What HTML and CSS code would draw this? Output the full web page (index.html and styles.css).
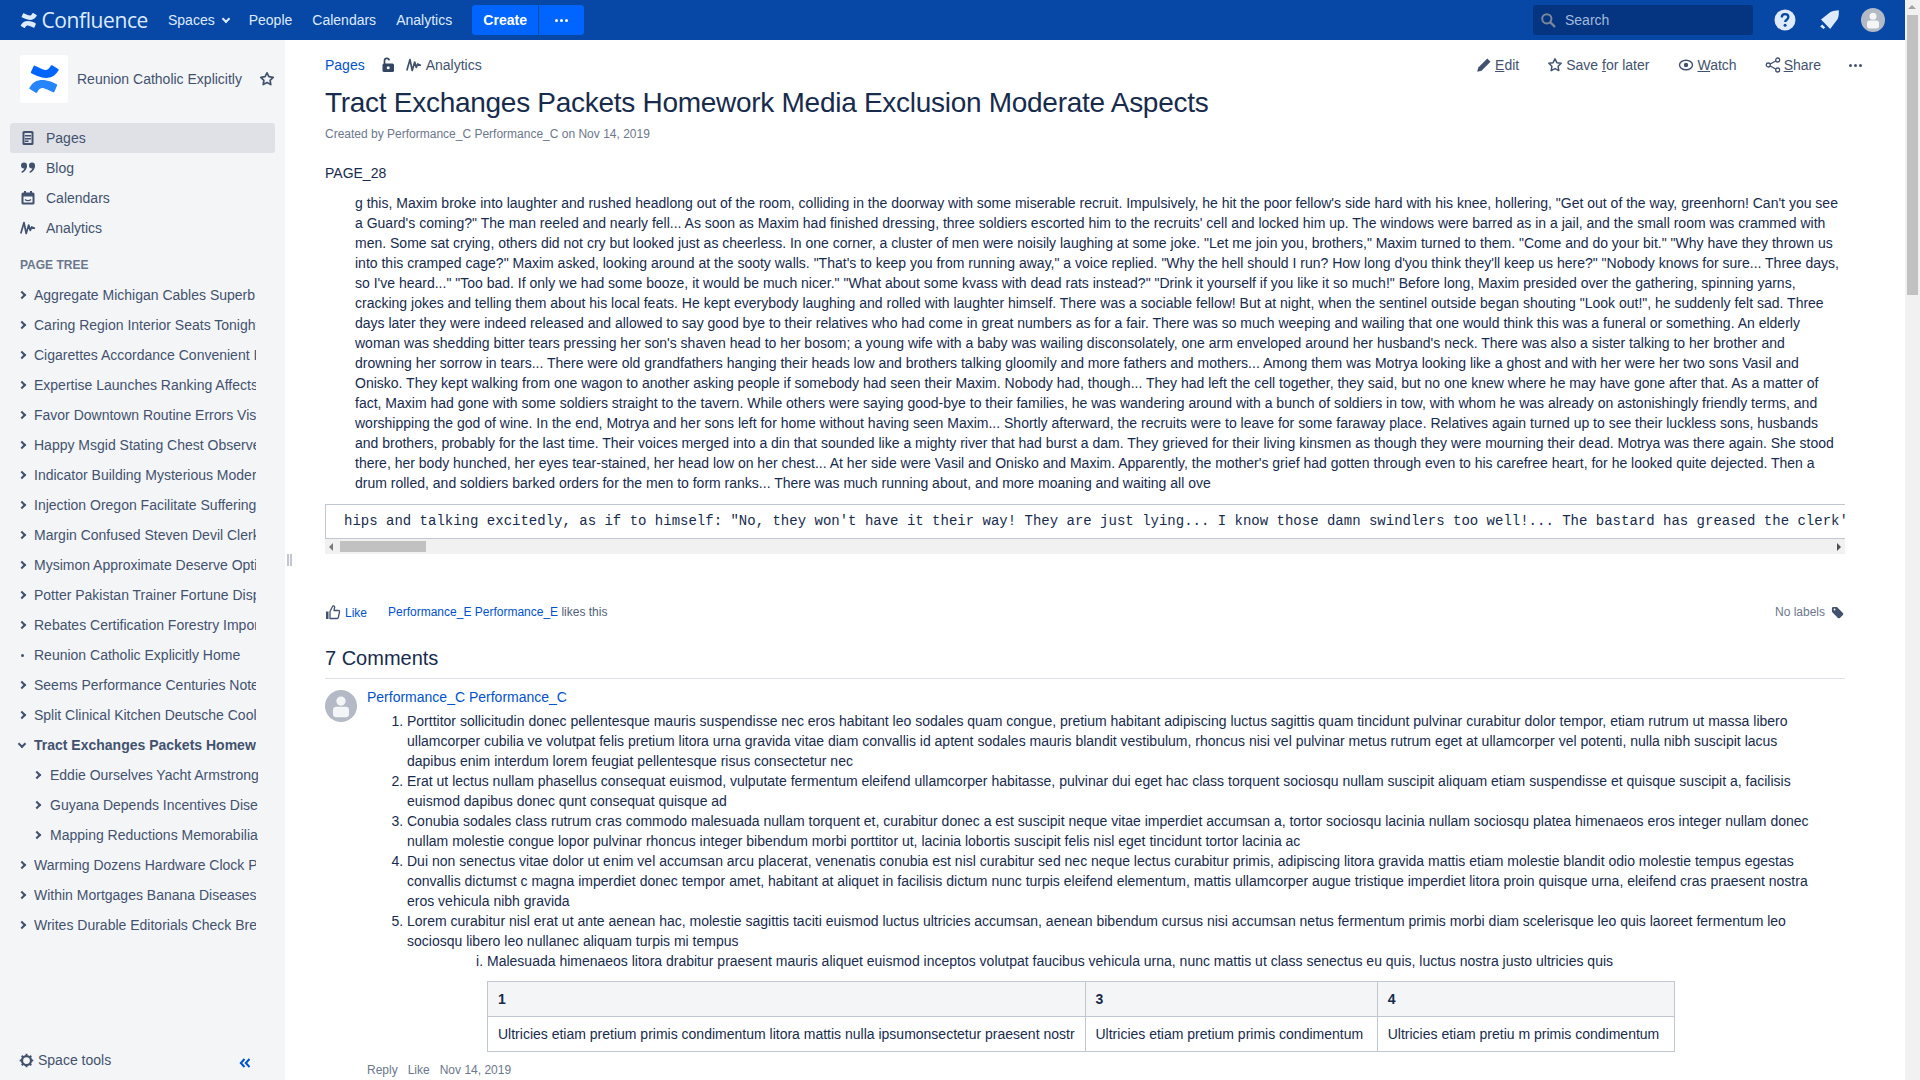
FILE: index.html
```html
<!DOCTYPE html>
<html lang="en">
<head>
    <meta charset="UTF-8">
    <meta name="viewport" content="width=device-width, initial-scale=1.0">
    <title>Tract Exchanges Packets Homework Media Exclusion Moderate Aspects</title>
    <link rel="stylesheet" href="styles.css">
</head>
<body>
<div class="window">
    <div class="page">

        <!-- Top bar -->
        <header class="topbar">
            <a class="brand">
                <svg class="brand-icon" viewBox="0 0 32 32"><path fill="#deebff" d="M2.3 23.4c-.3.5-.6 1-.9 1.4-.2.4-.1 1 .4 1.2l6 3.7c.4.3 1 .1 1.3-.3.2-.4.5-.9.9-1.5 2.4-3.9 4.8-3.4 9.1-1.4l6 2.8c.5.2 1 0 1.2-.4l2.8-6.4c.2-.4 0-1-.4-1.2-1.2-.6-3.7-1.7-6-2.8C13.8 15.5 6.4 16.7 2.3 23.4z"/><path fill="#deebff" d="M29.7 8.6c.3-.5.6-1 .9-1.4.2-.4.1-1-.4-1.2l-6-3.7c-.4-.3-1-.1-1.3.3-.2.4-.5.9-.9 1.5-2.4 3.9-4.8 3.4-9.1 1.4l-6-2.8c-.5-.2-1 0-1.2.4L2.9 9c-.2.4 0 1 .4 1.2 1.2.6 3.7 1.7 6 2.8 8.9 3.5 16.3 2.3 20.4-4.4z"/></svg>
                <span class="brand-name">Confluence</span>
            </a>
            <nav class="topnav">
                <a>Spaces <i class="chev chev-down chev-light"></i></a>
                <a>People</a>
                <a>Calendars</a>
                <a>Analytics</a>
            </nav>
            <div class="create-group">
                <button class="create-btn">Create</button>
                <button class="create-more"><span></span><span></span><span></span></button>
            </div>
            <div class="topbar-right">
                <div class="search">
                    <svg width="16" height="16" viewBox="0 0 16 16"><circle cx="6.8" cy="6.8" r="4.6" fill="none" stroke="#7a869a" stroke-width="2"/><path d="M10.4 10.4l4 4" stroke="#7a869a" stroke-width="2.2" stroke-linecap="round"/></svg>
                    <span>Search</span>
                </div>
                <svg class="top-icon" viewBox="0 0 24 24"><circle cx="12" cy="12" r="10.5" fill="#deebff"/><path d="M8.8 9.4c0-2 1.5-3.2 3.3-3.2s3.3 1.1 3.3 2.9c0 2.7-3.2 2.6-3.2 5" fill="none" stroke="#0747a6" stroke-width="2.3"/><circle cx="12.1" cy="17.3" r="1.5" fill="#0747a6"/></svg>
                <svg class="top-icon" viewBox="0 0 24 24"><path fill="#deebff" d="M21.8 2.2c-2.6.2-5.8.5-8.300 1.900L6.800 9.300 4 11.600 13.200 21l2-2.700 5.300-7.100c1.300-2.300 1.500-6.300 1.300-9zM5.200 16.500l-2 2.100 3.300 2.400 1.700-1.500z"/></svg>
                <span class="user-avatar">
                    <svg viewBox="0 0 24 24"><circle cx="12" cy="12" r="12" fill="#b3bac5"/><circle cx="12" cy="8.300" r="3.500" fill="#f4f5f7"/><rect x="6" y="12.500" width="12" height="8" rx="2.500" fill="#f4f5f7"/></svg>
                </span>
            </div>
        </header>

        <div class="columns">

            <!-- Sidebar -->
            <aside class="sidebar">
                <div class="space-head">
                    <span class="space-logo">
                        <svg viewBox="0 0 32 32"><path fill="#2684ff" d="M2.3 23.4c-.3.5-.6 1-.9 1.4-.2.4-.1 1 .4 1.2l6 3.7c.4.3 1 .1 1.3-.3.2-.4.5-.9.9-1.5 2.4-3.9 4.8-3.4 9.1-1.4l6 2.8c.5.2 1 0 1.2-.4l2.800-6.400c.2-.4 0-1-.4-1.200-1.200-.6-3.700-1.700-6-2.800C13.800 15.500 6.400 16.700 2.300 23.400z"/><path fill="#0065ff" d="M29.700 8.600c.3-.5.6-1 .9-1.400.2-.4.1-1-.4-1.200l-6-3.700c-.4-.3-1-.1-1.300.3-.2.4-.5.9-.9 1.500-2.400 3.900-4.800 3.400-9.100 1.400l-6-2.800c-.5-.2-1 0-1.200.4L2.900 9c-.2.4 0 1 .4 1.200 1.200.6 3.700 1.700 6 2.800 8.900 3.500 16.300 2.300 20.400-4.400z"/></svg>
                    </span>
                    <span class="space-name">Reunion Catholic Explicitly</span>
                    <svg class="space-star" viewBox="0 0 16 16"><path d="M8 1.800l1.900 3.900 4.300.6-3.100 3 .7 4.300L8 11.600l-3.800 2 .7-4.300-3.100-3 4.300-.6z" fill="none" stroke="#42526e" stroke-width="1.700" stroke-linejoin="round"/></svg>
                </div>

                <ul class="side-nav">
                    <li class="active">
                        <svg viewBox="0 0 16 16"><rect x="2.500" y="1" width="11" height="14" rx="1.500" fill="#42526e"/><rect x="4.500" y="3" width="7" height="10" fill="#dfe1e6"/><path d="M5 5h6v1.500H5zM5 8h6v1.500H5zM5 10.500h3.500V12H5z" fill="#42526e"/></svg>
                        Pages
                    </li>
                    <li>
                        <svg viewBox="0 0 16 16"><circle cx="4" cy="5.500" r="3" fill="#42526e"/><path d="M7 5.500c0 3.500-2 6-5 7.500l-.7-1.300C3.500 10.500 4.500 9 4.500 7z" fill="#42526e"/><circle cx="12" cy="5.500" r="3" fill="#42526e"/><path d="M15 5.500c0 3.500-2 6-5 7.500l-.7-1.300c2.200-1.200 3.200-2.700 3.200-4.700z" fill="#42526e"/></svg>
                        Blog
                    </li>
                    <li>
                        <svg viewBox="0 0 16 16"><rect x="1.500" y="2.500" width="13" height="12" rx="1.500" fill="#42526e"/><rect x="4" y="1" width="2" height="3" fill="#42526e"/><rect x="10" y="1" width="2" height="3" fill="#42526e"/><rect x="3.500" y="6.500" width="9" height="6" fill="#f4f5f7"/><path d="M5 9.500c1.500 1.500 4.500 1.500 6 0" stroke="#42526e" fill="none" stroke-width="1.200"/></svg>
                        Calendars
                    </li>
                    <li>
                        <svg viewBox="0 0 16 16"><path d="M.8 13.500L4 2.500l2.200 11 2.500-8.500 1.600 5.500 1.400-3.500 3.300 1.500" fill="none" stroke="#42526e" stroke-width="1.700" stroke-linejoin="round"/></svg>
                        Analytics
                    </li>
                </ul>

                <h5 class="tree-title">PAGE TREE</h5>
                <ul class="tree">
                    <li><i class="chev"></i><span>Aggregate Michigan Cables Superb Sister</span></li>
                    <li><i class="chev"></i><span>Caring Region Interior Seats Tonight Bound</span></li>
                    <li><i class="chev"></i><span>Cigarettes Accordance Convenient Ideas</span></li>
                    <li><i class="chev"></i><span>Expertise Launches Ranking Affects Model</span></li>
                    <li><i class="chev"></i><span>Favor Downtown Routine Errors Visual Notes</span></li>
                    <li><i class="chev"></i><span>Happy Msgid Stating Chest Observed Level</span></li>
                    <li><i class="chev"></i><span>Indicator Building Mysterious Modern Guide</span></li>
                    <li><i class="chev"></i><span>Injection Oregon Facilitate Suffering Cases</span></li>
                    <li><i class="chev"></i><span>Margin Confused Steven Devil Clerk Notice</span></li>
                    <li><i class="chev"></i><span>Mysimon Approximate Deserve Optimal Plan</span></li>
                    <li><i class="chev"></i><span>Potter Pakistan Trainer Fortune Display Set</span></li>
                    <li><i class="chev"></i><span>Rebates Certification Forestry Important Work</span></li>
                    <li><i class="dot"></i><span>Reunion Catholic Explicitly Home</span></li>
                    <li><i class="chev"></i><span>Seems Performance Centuries Notes Archive</span></li>
                    <li><i class="chev"></i><span>Split Clinical Kitchen Deutsche Cool Items</span></li>
                    <li class="current"><i class="chev chev-down"></i><span>Tract Exchanges Packets Homework Media</span></li>
                    <li class="child"><i class="chev"></i><span>Eddie Ourselves Yacht Armstrong Press</span></li>
                    <li class="child"><i class="chev"></i><span>Guyana Depends Incentives Disease Watch</span></li>
                    <li class="child"><i class="chev"></i><span>Mapping Reductions Memorabilia Today</span></li>
                    <li><i class="chev"></i><span>Warming Dozens Hardware Clock Parts Sale</span></li>
                    <li><i class="chev"></i><span>Within Mortgages Banana Diseases Found</span></li>
                    <li><i class="chev"></i><span>Writes Durable Editorials Check Brew Shop</span></li>
                </ul>

                <div class="space-tools">
                    <svg viewBox="0 0 16 16"><circle cx="8" cy="8" r="4.800" fill="none" stroke="#42526e" stroke-width="2.400"/><path d="M8 .8v2.500M8 12.700v2.500M.8 8h2.500M12.700 8h2.500M2.900 2.900l1.800 1.800M11.300 11.300l1.800 1.800M2.900 13.100l1.800-1.800M11.300 4.700l1.800-1.800" stroke="#42526e" stroke-width="2"/></svg>
                    <span>Space tools</span>
                    <svg class="collapse" viewBox="0 0 12 10"><path d="M5.500 1L1.800 5l3.700 4M10.500 1L6.800 5l3.700 4" fill="none" stroke="#0052cc" stroke-width="2"/></svg>
                </div>
            </aside>

            <div class="sash"></div>

            <!-- Main content -->
            <main class="content">
                <div class="page-bar">
                    <div class="crumbs">
                        <a class="link">Pages</a>
                        <svg class="lock" viewBox="0 0 14 16"><path d="M3.500 7V3.500C3.500 2 4.500 1.300 5.800 1.300S8 2 8.200 3.300" fill="none" stroke="#344563" stroke-width="1.700"/><rect x="1.500" y="6.500" width="11.500" height="8.500" rx="1.500" fill="#344563"/><circle cx="7.200" cy="10.700" r="1.500" fill="#fff"/></svg>
                        <svg class="crumb-icon" viewBox="0 0 16 16"><path d="M.8 13.500L4 2.500l2.200 11 2.500-8.500 1.600 5.500 1.400-3.500 3.300 1.500" fill="none" stroke="#42526e" stroke-width="1.700" stroke-linejoin="round"/></svg>
                        <span>Analytics</span>
                    </div>
                    <div class="actions">
                        <a>
                            <svg viewBox="0 0 16 16"><path d="M11.300 1.500l3.200 3.200-9 9-4.300 1.100 1.100-4.300z" fill="#42526e"/></svg>
                            <span><u>E</u>dit</span>
                        </a>
                        <a>
                            <svg viewBox="0 0 16 16"><path d="M8 1.800l1.900 3.900 4.300.6-3.100 3 .7 4.300L8 11.600l-3.800 2 .7-4.300-3.100-3 4.300-.6z" fill="none" stroke="#42526e" stroke-width="1.500" stroke-linejoin="round"/></svg>
                            <span>Save <u>f</u>or later</span>
                        </a>
                        <a class="watch">
                            <svg viewBox="0 0 16 16"><ellipse cx="8" cy="8" rx="6.500" ry="4.800" fill="none" stroke="#42526e" stroke-width="1.400"/><circle cx="8" cy="8" r="2.200" fill="#42526e"/></svg>
                            <span><u>W</u>atch</span>
                        </a>
                        <a>
                            <svg viewBox="0 0 16 16"><path d="M12.500 3L3.500 8l9 5" fill="none" stroke="#42526e" stroke-width="1.300"/><circle cx="12.700" cy="3" r="2" fill="#fff" stroke="#42526e" stroke-width="1.300"/><circle cx="3.300" cy="8" r="2" fill="#fff" stroke="#42526e" stroke-width="1.300"/><circle cx="12.700" cy="13" r="2" fill="#fff" stroke="#42526e" stroke-width="1.300"/></svg>
                            <span><u>S</u>hare</span>
                        </a>
                        <a class="more-dots"><span></span><span></span><span></span></a>
                    </div>
                </div>

                <h1 class="page-title">Tract Exchanges Packets Homework Media Exclusion Moderate Aspects</h1>
                <p class="byline">Created by Performance_C Performance_C on Nov 14, 2019</p>

                <p class="plain">PAGE_28</p>
                <p class="story">g this, Maxim broke into laughter and rushed headlong out of the room, colliding in the doorway with some miserable recruit. Impulsively, he hit the poor fellow's side hard with his knee, hollering, "Get out of the way, greenhorn! Can't you see a Guard's coming?" The man reeled and nearly fell... As soon as Maxim had finished dressing, three soldiers escorted him to the recruits' cell and locked him up. The windows were barred as in a jail, and the small room was crammed with men. Some sat crying, others did not cry but looked just as cheerless. In one corner, a cluster of men were noisily laughing at some joke. "Let me join you, brothers," Maxim turned to them. "Come and do your bit." "Why have they thrown us into this cramped cage?" Maxim asked, looking around at the sooty walls. "That's to keep you from running away," a voice replied. "Why the hell should I run? How long d'you think they'll keep us here?" "Nobody knows for sure... Three days, so I've heard..." "Too bad. If only we had some booze, it would be much nicer." "What about some kvass with dead rats instead?" "Drink it yourself if you like it so much!" Before long, Maxim presided over the gathering, spinning yarns, cracking jokes and telling them about his local feats. He kept everybody laughing and rolled with laughter himself. There was a sociable fellow! But at night, when the sentinel outside began shouting "Look out!", he suddenly felt sad. Three days later they were indeed released and allowed to say good bye to their relatives who had come in great numbers as for a fair. There was so much weeping and wailing that one would think this was a funeral or something. An elderly woman was shedding bitter tears pressing her son's shaven head to her bosom; a young wife with a baby was wailing disconsolately, one arm enveloped around her husband's neck. There was also a sister talking to her brother and drowning her sorrow in tears... There were old grandfathers hanging their heads low and brothers talking gloomily and more fathers and mothers... Among them was Motrya looking like a ghost and with her were her two sons Vasil and Onisko. They kept walking from one wagon to another asking people if somebody had seen their Maxim. Nobody had, though... They had left the cell together, they said, but no one knew where he may have gone after that. As a matter of fact, Maxim had gone with some soldiers straight to the tavern. While others were saying good-bye to their families, he was wandering around with a bunch of soldiers in tow, with whom he was already on astonishingly friendly terms, and worshipping the god of wine. In the end, Motrya and her sons left for home without having seen Maxim... Shortly afterward, the recruits were to leave for some faraway place. Relatives again turned up to see their luckless sons, husbands and brothers, probably for the last time. Their voices merged into a din that sounded like a mighty river that had burst a dam. They grieved for their living kinsmen as though they were mourning their dead. Motrya was there again. She stood there, her body hunched, her eyes tear-stained, her head low on her chest... At her side were Vasil and Onisko and Maxim. Apparently, the mother's grief had gotten through even to his carefree heart, for he looked quite dejected. Then a drum rolled, and soldiers barked orders for the men to form ranks... There was much running about, and more moaning and waiting all ove</p>

                <div class="code-wrap">
                    <pre class="code">hips and talking excitedly, as if to himself: "No, they won't have it their way! They are just lying... I know those damn swindlers too well!... The bastard has greased the clerk's palm, that is certain</pre>
                    <div class="hscroll">
                        <i class="arrow-left"></i>
                        <span class="hthumb"></span>
                        <i class="arrow-right"></i>
                    </div>
                </div>

                <div class="like-row">
                    <svg class="thumb" viewBox="0 0 16 16"><path d="M1 7.500h2.500V15H1z" fill="#42526e"/><path d="M5 7.500l2.500-5c.2-1 2-1 2.200.5L9 6.500h4.500c.8 0 1.200.7 1 1.500l-1.200 5.500c-.1.600-.6 1-1.200 1H5z" fill="none" stroke="#42526e" stroke-width="1.300" stroke-linejoin="round"/></svg>
                    <a class="link like-link">Like</a>
                    <span class="likes"><a class="link">Performance_E Performance_E</a> likes this</span>
                    <span class="labels">No labels
                        <svg viewBox="0 0 14 14"><path d="M1 2.500C1 1.700 1.700 1 2.500 1h3.200c.4 0 .8.200 1 .4l6.100 6.100c.6.600.6 1.500 0 2.100l-3.200 3.200c-.6.600-1.500.6-2.100 0L1.400 6.700C1.200 6.500 1 6.100 1 5.700z" fill="#42526e"/><circle cx="3.800" cy="3.800" r="1" fill="#fff"/></svg>
                    </span>
                </div>

                <h2 class="comments-title">7 Comments</h2>

                <div class="comment">
                    <span class="comment-avatar">
                        <svg viewBox="0 0 24 24"><circle cx="12" cy="12" r="12" fill="#b3bac5"/><circle cx="12" cy="8.300" r="3.500" fill="#f4f5f7"/><rect x="6" y="12.500" width="12" height="8" rx="2.500" fill="#f4f5f7"/></svg>
                    </span>
                    <div class="comment-body">
                        <a class="link comment-author">Performance_C Performance_C</a>
                        <ol class="comment-list">
                            <li>Porttitor sollicitudin donec pellentesque mauris suspendisse nec eros habitant leo sodales quam congue, pretium habitant adipiscing luctus sagittis quam tincidunt pulvinar curabitur dolor tempor, etiam rutrum ut massa libero ullamcorper cubilia ve volutpat felis pretium litora urna gravida vitae diam convallis id aptent sodales mauris blandit vestibulum, rhoncus nisi vel pulvinar metus rutrum eget at ullamcorper vel potenti, nulla nibh suscipit lacus dapibus enim interdum lorem feugiat pellentesque risus consectetur nec</li>
                            <li>Erat ut lectus nullam phasellus consequat euismod, vulputate fermentum eleifend ullamcorper habitasse, pulvinar dui eget hac class torquent sociosqu nullam suscipit aliquam etiam suspendisse et quisque suscipit a, facilisis euismod dapibus donec qunt consequat quisque ad</li>
                            <li>Conubia sodales class rutrum cras commodo malesuada nullam torquent et, curabitur donec a est suscipit neque vitae imperdiet accumsan a, tortor sociosqu lacinia nullam sociosqu platea himenaeos eros integer nullam donec nullam molestie congue lopor pulvinar rhoncus integer bibendum morbi porttitor ut, lacinia lobortis suscipit felis nisl eget tincidunt tortor lacinia ac</li>
                            <li>Dui non senectus vitae dolor ut enim vel accumsan arcu placerat, venenatis conubia est nisl curabitur sed nec neque lectus curabitur primis, adipiscing litora gravida mattis etiam molestie blandit odio molestie tempus egestas convallis dictumst c magna imperdiet donec tempor amet, habitant at aliquet in facilisis dictum nunc turpis eleifend elementum, mattis ullamcorper augue tristique imperdiet litora proin quisque urna, eleifend cras praesent nostra eros vehicula nibh gravida</li>
                            <li>Lorem curabitur nisl erat ut ante aenean hac, molestie sagittis taciti euismod luctus ultricies accumsan, aenean bibendum cursus nisi accumsan netus fermentum primis morbi diam scelerisque leo quis laoreet fermentum leo sociosqu libero leo nullanec aliquam turpis mi tempus
                                <ol class="sub-list">
                                    <li>Malesuada himenaeos litora drabitur praesent mauris aliquet euismod inceptos volutpat faucibus vehicula urna, nunc mattis ut class senectus eu quis, luctus nostra justo ultricies quis</li>
                                </ol>
                            </li>
                        </ol>
                        <table class="comment-table">
                            <tr>
                                <th class="col-a">1</th>
                                <th class="col-b">3</th>
                                <th class="col-c">4</th>
                            </tr>
                            <tr>
                                <td>Ultricies etiam pretium primis condimentum litora mattis nulla ipsumonsectetur praesent nostr</td>
                                <td>Ultricies etiam pretium primis condimentum</td>
                                <td>Ultricies etiam pretiu m primis condimentum</td>
                            </tr>
                        </table>
                        <div class="comment-actions">
                            <span>Reply</span>
                            <span>Like</span>
                            <span>Nov 14, 2019</span>
                        </div>
                    </div>
                </div>
            </main>
        </div>
    </div>

    <!-- Window scrollbar -->
    <div class="vscroll">
        <i class="arrow-up"></i>
        <span class="vthumb"></span>
    </div>
</div>
</body>
</html>
```

FILE: styles.css
```css
/* General */
html, body {
    margin: 0;
    padding: 0;
    height: 100%;
    overflow: hidden;
}

body {
    font-family: "Liberation Sans", Arial, sans-serif;
    font-size: 14px;
    line-height: 20px;
    color: #172b4d;
    background-color: #fff;
}

ul, ol {
    margin: 0;
    padding: 0;
}

.link {
    color: #0052cc;
}

.window {
    display: flex;
    height: 1080px;
}

.page {
    flex: 1;
    min-width: 0;
    display: flex;
    flex-direction: column;
}

/* Top bar */
.topbar {
    flex: 0 0 40px;
    display: flex;
    align-items: center;
    background-color: #0747a6;
    color: #deebff;
    padding-left: 20px;
}

.brand {
    display: flex;
    align-items: center;
    width: 128px;
    margin-right: 20px;
}

.brand-icon {
    width: 19px;
    height: 19px;
    margin-right: 4px;
}

.brand-name {
    font-family: "Open Sans", sans-serif;
    font-size: 21px;
    letter-spacing: -0.4px;
}

.topnav {
    display: flex;
    gap: 20px;
}

.topnav a {
    display: flex;
    align-items: center;
    gap: 8px;
}

.create-group {
    display: flex;
    margin-left: 20px;
    gap: 1px;
}

.create-group button {
    height: 30px;
    border: none;
    background-color: #0065ff;
    color: #fff;
    font-family: inherit;
    font-size: 14px;
    font-weight: bold;
    padding: 0;
}

.create-btn {
    width: 66px;
    border-radius: 3px 0 0 3px;
}

.create-more {
    width: 45px;
    border-radius: 0 3px 3px 0;
    display: flex;
    align-items: center;
    justify-content: center;
    gap: 2px;
}

.create-more span, .more-dots span {
    width: 3px;
    height: 3px;
    border-radius: 50%;
    background-color: #fff;
}

.topbar-right {
    margin-left: auto;
    display: flex;
    align-items: center;
    padding-right: 20px;
}

.search {
    width: 220px;
    height: 30px;
    box-sizing: border-box;
    display: flex;
    align-items: center;
    gap: 9px;
    padding-left: 7px;
    margin-right: 20px;
    border-radius: 3px;
    background-color: #053581;
    color: #a4b9dc;
}

.top-icon {
    width: 24px;
    height: 24px;
    margin-right: 20px;
}

.user-avatar {
    width: 24px;
    height: 24px;
}

/* Sidebar */
.columns {
    flex: 1;
    min-height: 0;
    display: flex;
}

.sidebar {
    flex: 0 0 285px;
    display: flex;
    flex-direction: column;
    background-color: #f4f5f7;
    color: #42526e;
    padding-top: 15px;
    box-sizing: border-box;
}

.space-head {
    display: flex;
    align-items: center;
    padding-left: 20px;
    height: 48px;
}

.space-logo {
    width: 48px;
    height: 48px;
    box-sizing: border-box;
    padding: 8px;
    background-color: #fff;
    border-radius: 3px;
}

.space-logo svg {
    display: block;
}

.space-name {
    margin-left: 9px;
    width: 182px;
    white-space: nowrap;
}

.space-star {
    width: 16px;
    height: 16px;
}

.side-nav {
    list-style: none;
    margin: 20px 10px 0;
}

.side-nav li {
    height: 30px;
    display: flex;
    align-items: center;
    gap: 10px;
    padding-left: 10px;
    border-radius: 3px;
}

.side-nav li svg {
    width: 16px;
    height: 16px;
}

.side-nav .active {
    background-color: #dfe1e6;
}

.tree-title {
    margin: 14px 0 0 20px;
    height: 16px;
    font-size: 12px;
    line-height: 16px;
    color: #6b778c;
}

.tree {
    list-style: none;
    margin-top: 7px;
}

.tree li {
    height: 30px;
    display: flex;
    align-items: center;
    padding-left: 19px;
}

.tree li span {
    margin-left: 7px;
    width: 222px;
    overflow: hidden;
    white-space: nowrap;
}

.tree .child {
    padding-left: 34px;
}

.tree .child span {
    margin-left: 8px;
    width: 208px;
}

.tree .current {
    font-weight: bold;
}

.chev {
    flex: none;
    width: 4px;
    height: 4px;
    margin-right: 2px;
    border-top: 2px solid #42526e;
    border-right: 2px solid #42526e;
    transform: rotate(45deg);
}

.chev-down {
    margin-top: -3px;
    transform: rotate(135deg);
}

.chev-light {
    border-color: #deebff;
    margin-right: 0;
}

.dot {
    flex: none;
    width: 3px;
    height: 3px;
    margin: 0 3px 0 2px;
    background-color: #42526e;
    border-radius: 50%;
}

.space-tools {
    margin-top: auto;
    height: 40px;
    display: flex;
    align-items: center;
    padding-left: 19px;
    margin-bottom: 0;
}

.space-tools svg {
    width: 15px;
    height: 15px;
}

.space-tools span {
    margin-left: 4px;
}

.space-tools .collapse {
    width: 12px;
    height: 10px;
    margin-left: auto;
    margin-right: 34px;
    margin-top: 5px;
}

.sash {
    position: relative;
    flex: none;
    width: 0;
}

.sash::after {
    content: "";
    position: absolute;
    left: 2px;
    top: 514px;
    height: 12px;
    border-left: 2px solid #c1c7d0;
    border-right: 2px solid #c1c7d0;
    width: 1px;
}

/* Main content */
.content {
    flex: 1;
    min-width: 0;
    padding: 0 60px 0 40px;
    overflow: hidden;
}

.page-bar {
    display: flex;
    justify-content: space-between;
    align-items: center;
    height: 30px;
    margin-top: 10px;
    color: #42526e;
}

.crumbs {
    display: flex;
    align-items: center;
}

.lock {
    width: 14px;
    height: 16px;
    margin-left: 16px;
}

.crumb-icon {
    width: 16px;
    height: 16px;
    margin: 0 4px 0 11px;
}

.actions {
    display: flex;
    align-items: center;
    gap: 28px;
    margin-right: -18px;
}

.actions a {
    display: flex;
    align-items: center;
    gap: 3px;
}

.actions svg {
    width: 16px;
    height: 16px;
}

.actions .watch {
    margin-left: 1px;
}

.actions .more-dots {
    gap: 2px;
    padding-right: 1px;
}

.more-dots span {
    background-color: #42526e;
}

.page-title {
    margin: 4px 0 0;
    font-size: 28px;
    line-height: 38px;
    font-weight: normal;
    letter-spacing: -0.28px;
    color: #172b4d;
}

.byline {
    margin: 4px 0 0;
    font-size: 12px;
    line-height: 16px;
    color: #6b778c;
}

.plain {
    margin: 21px 0 0;
}

.story {
    margin: 10px 0 0;
    padding-left: 30px;
}

.code-wrap {
    margin-top: 11px;
}

.code {
    margin: 0;
    height: 33px;
    padding-left: 18px;
    font-family: "Liberation Mono", monospace;
    font-size: 14px;
    line-height: 33px;
    overflow: hidden;
    white-space: pre;
    border: 1px solid #c1c7d0;
    border-right: none;
}

.hscroll {
    height: 15px;
    display: flex;
    align-items: center;
    background-color: #f1f1f1;
    padding: 0 4px;
}

.hthumb {
    width: 86px;
    height: 11px;
    margin-left: 7px;
    background-color: #c1c1c1;
}

.arrow-left, .arrow-right, .arrow-up {
    width: 0;
    height: 0;
    border-style: solid;
    border-color: transparent;
}

.arrow-left {
    border-width: 4px 4px 4px 0;
    border-right-color: #7a7a7a;
}

.arrow-right {
    margin-left: auto;
    border-width: 4px 0 4px 4px;
    border-left-color: #505050;
}

.like-row {
    display: flex;
    align-items: center;
    height: 20px;
    margin-top: 48px;
    font-size: 12px;
}

.thumb {
    width: 16px;
    height: 16px;
}

.like-link {
    margin-left: 4px;
    margin-top: 2px;
}

.likes {
    margin-left: 21px;
    margin-top: -1px;
    color: #505f79;
}

.labels {
    margin-left: auto;
    display: flex;
    align-items: center;
    gap: 6px;
    color: #6b778c;
    padding-right: 1px;
}

.labels svg {
    width: 13px;
    height: 13px;
}

.comments-title {
    margin: 22px 0 0;
    padding-bottom: 6px;
    font-size: 20px;
    line-height: 28px;
    font-weight: normal;
    border-bottom: 1px solid #dfe1e6;
}

.comment {
    display: flex;
    margin-top: 8px;
}

.comment-avatar {
    flex: none;
    width: 32px;
    height: 32px;
    margin-top: 3px;
    margin-right: 10px;
}

.comment-body {
    flex: 1;
    min-width: 0;
    padding-right: 30px;
}

.comment-author {
    display: block;
}

.comment-list {
    padding-left: 40px;
    margin-top: 4px;
}

.sub-list {
    list-style: lower-roman;
    padding-left: 40px;
    margin-left: 40px;
}

.comment-table {
    border-collapse: collapse;
    margin: 10px 0 0 120px;
    table-layout: fixed;
    width: 1188px;
}

.comment-table th, .comment-table td {
    border: 1px solid #c1c7d0;
    padding: 7px 10px;
    text-align: left;
    white-space: nowrap;
    overflow: hidden;
}

.comment-table th {
    background-color: #f4f5f7;
}

.col-a {
    width: 576px;
}

.col-b {
    width: 271px;
}

.col-c {
    width: 276px;
}

.comment-actions {
    display: flex;
    gap: 10px;
    margin-top: 8px;
    font-size: 12px;
    color: #6b778c;
}

/* Window scrollbar */
.vscroll {
    position: relative;
    flex: 0 0 15px;
    background-color: #f1f1f1;
    box-sizing: border-box;
    padding: 15px 2px 0;
}

.vthumb {
    display: block;
    height: 280px;
    background-color: #c1c1c1;
}

.arrow-up {
    position: absolute;
    top: 5px;
    left: 3px;
    border-width: 0 4px 4px;
    border-bottom-color: #a3a3a3;
}
```
